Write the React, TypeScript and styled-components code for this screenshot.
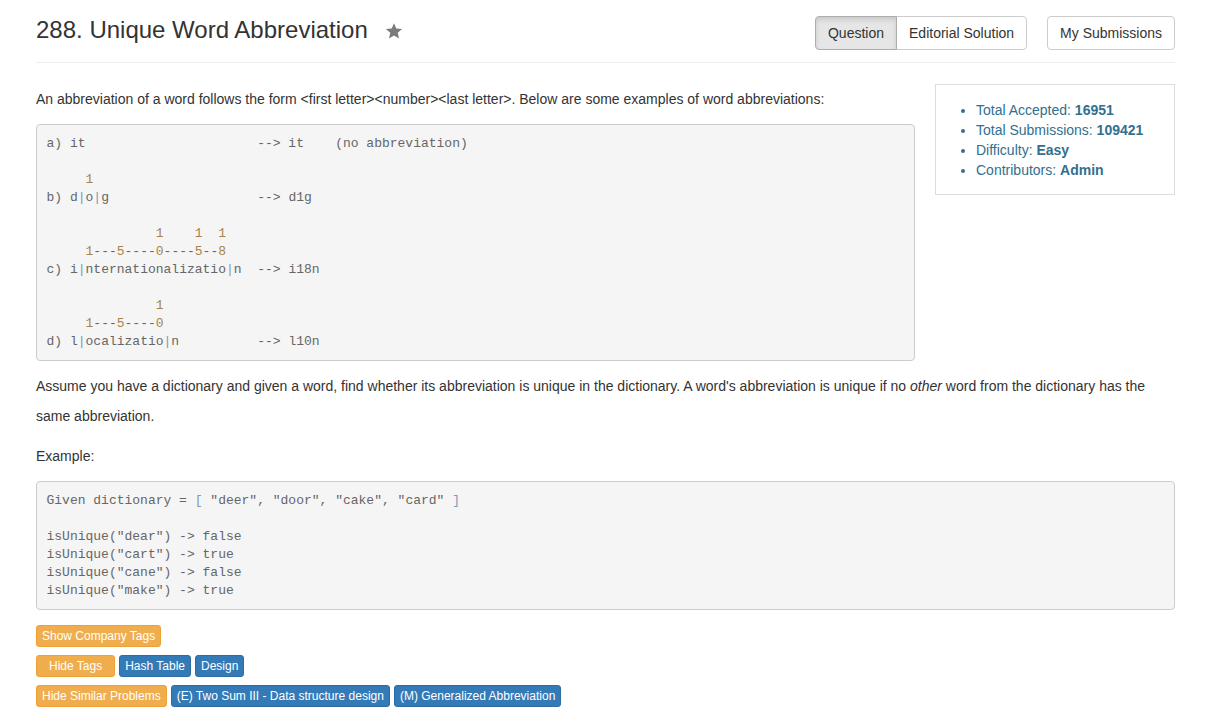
import React from "react";
import styled, { createGlobalStyle } from "styled-components";

const GlobalStyle = createGlobalStyle`
  html, body { margin: 0; padding: 0; background: #fff; }
  body {
    font-family: "Liberation Sans", Helvetica, Arial, sans-serif;
    font-size: 14px;
    line-height: 1.42857;
    color: #333;
  }
  * { box-sizing: border-box; }
`;

const Page = styled.div`
  max-width: 1170px;
  margin: 0 auto;
  padding: 0 14.5px 0 16.5px;
`;

const Header = styled.header`
  display: flex;
  align-items: flex-start;
  justify-content: space-between;
  padding: 16px 0 12px;
  border-bottom: 1px solid #eee;
`;

const TitleWrap = styled.div`
  display: flex;
  align-items: center;
  gap: 17px;
  padding-top: 1px;
`;

const Title = styled.h3`
  margin: 0;
  font-size: 24px;
  font-weight: 500;
  line-height: 26px;
  color: #333;
`;

const StarIcon = styled.svg`
  width: 18px;
  height: 18px;
  fill: #7b7b7b;
  margin-top: 1px;
`;

const Actions = styled.div`
  display: flex;
  gap: 20px;
`;

const ButtonGroup = styled.div`
  display: flex;
`;

const NavButton = styled.button<{ $active?: boolean; $pos?: "first" | "last" | "single" }>`
  font-family: inherit;
  font-size: 14px;
  line-height: 20px;
  height: 34px;
  padding: 6px 12px;
  color: #333;
  cursor: pointer;
  background: ${(p) => (p.$active ? "#e6e6e6" : "#fff")};
  border: 1px solid ${(p) => (p.$active ? "#adadad" : "#ccc")};
  box-shadow: ${(p) => (p.$active ? "inset 0 3px 5px rgba(0,0,0,0.125)" : "none")};
  border-radius: ${(p) =>
    p.$pos === "first" ? "4px 0 0 4px" : p.$pos === "last" ? "0 4px 4px 0" : "4px"};
  margin-left: ${(p) => (p.$pos === "last" ? "-1px" : "0")};
  position: relative;
  z-index: ${(p) => (p.$active ? 2 : 1)};
`;

const Content = styled.main`
  padding-top: 21px;
`;

const TopRow = styled.div`
  display: flex;
  align-items: flex-start;
  gap: 20px;
`;

const MainCol = styled.div`
  flex: 1;
  min-width: 0;
`;

const Paragraph = styled.p`
  margin: 0 0 10px;
  line-height: 30px;
`;

const Pre = styled.pre`
  margin: 0 0 10px;
  padding: 9.5px;
  background: #f5f5f5;
  border: 1px solid #ccc;
  border-radius: 4px;
  font-family: "Liberation Mono", "Courier New", monospace;
  font-size: 13px;
  line-height: 18px;
  color: #666;
  white-space: pre;
  overflow: auto;
`;

const Num = styled.span`
  color: #a8824e;
`;

const Pun = styled.span`
  color: #7e98b8;
`;

const StatsBox = styled.aside`
  width: 240px;
  flex: none;
  border: 1px solid #ddd;
  padding: 15px 0 14px;
`;

const StatsList = styled.ul`
  margin: 0;
  padding-left: 40px;
  line-height: 20px;
  color: #31708f;
`;

const StatItem = styled.li``;

const Strong = styled.b`
  font-weight: 700;
`;

const TagSection = styled.div`
  padding-top: 5px;
  display: flex;
  flex-direction: column;
  gap: 8px;
`;

const TagRow = styled.div`
  display: flex;
  gap: 4px;
`;

const Tag = styled.span<{ $variant: "warning" | "primary"; $wide?: boolean }>`
  display: inline-block;
  font-size: 12px;
  line-height: 18px;
  padding: 1px ${(p) => (p.$wide ? "12px" : "5px")};
  border-radius: 3px;
  color: #fff;
  background: ${(p) => (p.$variant === "warning" ? "#f0ad4e" : "#337ab7")};
  border: 1px solid ${(p) => (p.$variant === "warning" ? "#eea236" : "#2e6da4")};
  white-space: nowrap;
`;

function CodeLine({ text }: { text: string }) {
  const parts = text.split(/(\b\d+\b|[|\[\]])/);
  return (
    <>
      {parts.map((part, i) => {
        if (!part) return null;
        if (/^\d+$/.test(part)) return <Num key={i}>{part}</Num>;
        if (/^[|\[\]]$/.test(part)) return <Pun key={i}>{part}</Pun>;
        return <React.Fragment key={i}>{part}</React.Fragment>;
      })}
      {"\n"}
    </>
  );
}

function Code({ lines }: { lines: string[] }) {
  return (
    <Pre>
      {lines.map((l, i) => (
        <CodeLine key={i} text={l} />
      ))}
    </Pre>
  );
}

const example1 = [
  "a) it                      --> it    (no abbreviation)",
  "",
  "     1",
  "b) d|o|g                   --> d1g",
  "",
  "              1    1  1",
  "     1---5----0----5--8",
  "c) i|nternationalizatio|n  --> i18n",
  "",
  "              1",
  "     1---5----0",
  "d) l|ocalizatio|n          --> l10n",
];

const example2 = [
  'Given dictionary = [ "deer", "door", "cake", "card" ]',
  "",
  'isUnique("dear") -> false',
  'isUnique("cart") -> true',
  'isUnique("cane") -> false',
  'isUnique("make") -> true',
];

export default function App() {
  return (
    <>
      <GlobalStyle />
      <Page>
        <Header>
          <TitleWrap>
            <Title>288. Unique Word Abbreviation</Title>
            <StarIcon viewBox="0 0 24 24">
              <polygon points="12,1.5 15.1,8.6 22.8,9.3 17,14.4 18.7,22 12,18 5.3,22 7,14.4 1.2,9.3 8.9,8.6" />
            </StarIcon>
          </TitleWrap>
          <Actions>
            <ButtonGroup>
              <NavButton $active $pos="first">Question</NavButton>
              <NavButton $pos="last">Editorial Solution</NavButton>
            </ButtonGroup>
            <NavButton $pos="single">My Submissions</NavButton>
          </Actions>
        </Header>
        <Content>
          <TopRow>
            <MainCol>
              <Paragraph>
                An abbreviation of a word follows the form &lt;first letter&gt;&lt;number&gt;&lt;last letter&gt;. Below are some examples of word abbreviations:
              </Paragraph>
              <Code lines={example1} />
            </MainCol>
            <StatsBox>
              <StatsList>
                <StatItem>Total Accepted: <Strong>16951</Strong></StatItem>
                <StatItem>Total Submissions: <Strong>109421</Strong></StatItem>
                <StatItem>Difficulty: <Strong>Easy</Strong></StatItem>
                <StatItem>Contributors: <Strong>Admin</Strong></StatItem>
              </StatsList>
            </StatsBox>
          </TopRow>
          <Paragraph>
            Assume you have a dictionary and given a word, find whether its abbreviation is unique in the dictionary. A word's abbreviation is unique if no <i>other</i> word from the dictionary has the same abbreviation.
          </Paragraph>
          <Paragraph>Example:</Paragraph>
          <Code lines={example2} />
          <TagSection>
            <TagRow>
              <Tag $variant="warning">Show Company Tags</Tag>
            </TagRow>
            <TagRow>
              <Tag $variant="warning" $wide>Hide Tags</Tag>
              <Tag $variant="primary">Hash Table</Tag>
              <Tag $variant="primary">Design</Tag>
            </TagRow>
            <TagRow>
              <Tag $variant="warning">Hide Similar Problems</Tag>
              <Tag $variant="primary">(E) Two Sum III - Data structure design</Tag>
              <Tag $variant="primary">(M) Generalized Abbreviation</Tag>
            </TagRow>
          </TagSection>
        </Content>
      </Page>
    </>
  );
}
